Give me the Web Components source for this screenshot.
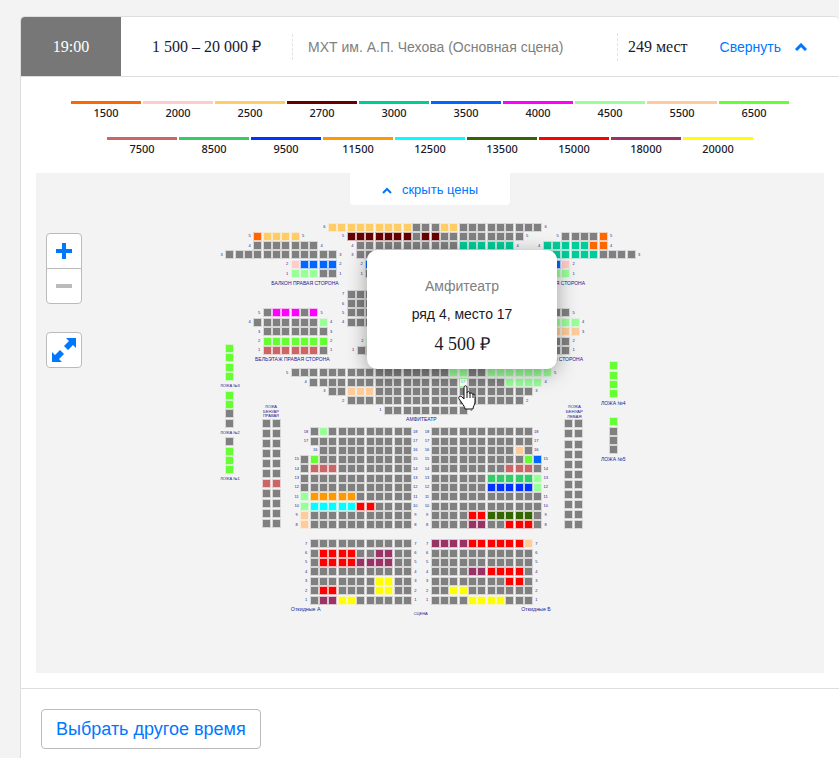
<!DOCTYPE html>
<html lang="ru">
<head>
<meta charset="utf-8">
<meta name="viewport" content="width=device-width, initial-scale=1">
<title>МХТ им. А.П. Чехова</title>
<style>
    body {
        margin: 0;
        min-height: 100vh;
        display: flex;
        flex-direction: column;
        background: #f3f3f3;
        color: #1a1a2b;
        font-family: "Liberation Sans", Arial, sans-serif;
        overflow-x: hidden;
    }
</style>
</head>
<body>
    <session-card>
        <session-header slot="header">
            <span slot="time">19:00</span>
            <span slot="price">1 500 – 20 000 ₽</span>
            <span slot="venue">МХТ им. А.П. Чехова (Основная сцена)</span>
            <span slot="seats">249 мест</span>
        </session-header>
        <price-legend></price-legend>
        <hall-map>
            <seat-tooltip slot="tooltip">
                <span slot="sector">Амфитеатр</span>
                <span slot="place">ряд 4, место 17</span>
                <span slot="price">4 500 ₽</span>
            </seat-tooltip>
        </hall-map>
        <span slot="action">Выбрать другое время</span>
    </session-card>

<script>
const PRICES = [
    ['O', 1500, '#ff6600'],
    ['P', 2000, '#ffcccc'],
    ['Y', 2500, '#ffcc66'],
    ['M', 2700, '#660000'],
    ['T', 3000, '#00cc99'],
    ['B', 3500, '#0066ff'],
    ['F', 4000, '#ff00ff'],
    ['L', 4500, '#99ff99'],
    ['A', 5500, '#ffcc99'],
    ['G', 6500, '#66ff33'],
    ['R', 7500, '#cc6666'],
    ['E', 8500, '#33cc66'],
    ['D', 9500, '#0033ff'],
    ['N', 11500, '#ff9900'],
    ['C', 12500, '#00ffff'],
    ['K', 13500, '#336600'],
    ['X', 15000, '#ff0000'],
    ['V', 18000, '#993366'],
    ['W', 20000, '#ffff00'],
];

const COLORS = { '#': '#808080' };
PRICES.forEach(([key, , color]) => { COLORS[key] = color; });

// row number, x of the first seat, y, seats ('#' is a sold one, '@' the chosen one)
const ROWS = [
    // балкон, правая сторона
    [5, 773, 709, 'OYYYY'],
    [4, 773, 737, '#######'],
    [3, 689, 764, '############'],
    [2, 885, 793, 'PBBBB'],
    [1, 885, 821, 'LLL##'],
    // балкон
    [6, 997, 681, 'YYYYYYYYY###YY#########'],
    [5, 1053, 709, 'MMMMMMM#MM#########'],
    [4, 1081, 737, '###########TTTTTT'],
    [3, 1081, 764, '#################'],
    [2, 1109, 793, 'BBBBBBBBBBBBBBB'],
    [1, 1109, 821, '###############'],
    // балкон, левая сторона
    [5, 1697, 709, '####O'],
    [4, 1641, 737, 'TTTTTOO'],
    [3, 1585, 764, 'TTTTTTTT####'],
    [2, 1585, 793, 'BBBBP'],
    [1, 1585, 821, '##LLL'],
    // бельэтаж, правая сторона
    [5, 801, 938, '#FFF#F'],
    [4, 773, 967, '#######L'],
    [3, 801, 995, '#######'],
    [2, 801, 1023, 'GGGGGGG'],
    [1, 801, 1051, 'RRRRRR#'],
    // бельэтаж
    [7, 1053, 882, '###################'],
    [6, 1053, 911, '###################'],
    [5, 1053, 938, '###################'],
    [4, 1053, 966, '###################'],
    [2, 1111, 1023, 'LLLLLLLLLLLLLLL'],
    [1, 1083, 1051, '#################'],
    // бельэтаж, левая сторона
    [5, 1641, 938, '###'],
    [4, 1641, 967, 'LLLL'],
    [3, 1641, 995, 'AAAA'],
    [2, 1641, 1023, '###'],
    [1, 1641, 1051, '###'],
    // амфитеатр
    [5, 885, 1118, '#################LL##LLLLLLL'],
    [4, 941, 1146, '################@####LLLL'],
    [3, 997, 1174, '##AAA#################'],
    [2, 1053, 1202, '###################'],
    [1, 1165, 1230, '#########'],
    // партер, слева от прохода
    [18, 942, 1295, '#L#########'],
    [17, 942, 1323, '###########'],
    [16, 970, 1351, '##########'],
    [15, 914, 1378, '#G##########'],
    [14, 914, 1406, '#RRR########'],
    [13, 914, 1435, '############'],
    [12, 914, 1462, '############'],
    [11, 914, 1490, 'LNNNNN######'],
    [10, 914, 1518, 'LCCCCCXX####'],
    [9, 914, 1546, 'A###########'],
    [8, 914, 1574, 'A###########'],
    [7, 942, 1631, '###########'],
    [6, 942, 1660, '#XXXX##VV##'],
    [5, 942, 1687, '#XXXXVVVV##'],
    [4, 942, 1715, '###########'],
    [3, 942, 1744, '#######WW##'],
    [2, 942, 1772, '#XX####WW##'],
    [1, 942, 1800, '#VVWW######'],
    // партер, справа от прохода
    [18, 1305, 1295, '###########'],
    [17, 1305, 1323, '###########'],
    [16, 1305, 1351, '#########A#'],
    [15, 1305, 1378, '##########GB'],
    [14, 1305, 1406, '########RRR#'],
    [13, 1305, 1435, '######EEEEEL'],
    [12, 1305, 1462, '######DDDDDL'],
    [11, 1305, 1490, '############'],
    [10, 1305, 1518, '############'],
    [9, 1305, 1546, '####XXKKKKK#'],
    [8, 1305, 1574, '####VV##XXX#'],
    [7, 1305, 1631, 'VVVVXXXXXXA'],
    [6, 1305, 1660, '###########'],
    [5, 1305, 1687, '###########'],
    [4, 1305, 1715, '####VVXXXX#'],
    [3, 1305, 1744, '########XX#'],
    [2, 1305, 1772, '##WW#######'],
    [1, 1305, 1800, '####WWWW###'],
];

// x, y of the first seat, y of the last one, seats from top to bottom
const BOXES = [
    [689, 1045, 1129, 'GGGG'],
    [689, 1185, 1269, 'GG##'],
    [689, 1325, 1409, '#GGG'],
    [799, 1269, 1571, '######R####'],
    [829, 1269, 1571, '######R####'],
    [1705, 1271, 1574, '###########'],
    [1735, 1271, 1574, '###########'],
    [1840, 1097, 1181, 'GGGG'],
    [1840, 1265, 1349, 'G###'],
];

// text, x of the centre, y, size
const LABELS = [
    ['БАЛКОН ПРАВАЯ СТОРОНА', 915, 850, 15],
    ['БАЛКОН ЛЕВАЯ СТОРОНА', 1659, 850, 15],
    ['БЕЛЬЭТАЖ ПРАВАЯ СТОРОНА', 877, 1078, 15],
    ['БЕЛЬЭТАЖ ЛЕВАЯ СТОРОНА', 1642, 1078, 15],
    ['АМФИТЕАТР', 1264, 1258, 15],
    ['ЛОЖА №3', 690, 1157, 12],
    ['ЛОЖА №2', 690, 1298, 12],
    ['ЛОЖА №1', 690, 1436, 12],
    ['ЛОЖА', 813, 1220, 12],
    ['БЕНУАР', 813, 1234, 12],
    ['ПРАВАЯ', 813, 1247, 12],
    ['ЛОЖА', 1723, 1220, 13],
    ['БЕНУАР', 1723, 1234, 13],
    ['ЛЕВАЯ', 1723, 1248, 13],
    ['ЛОЖА №4', 1840, 1210, 15],
    ['ЛОЖА №5', 1840, 1378, 15],
    ['Откидные А', 917, 1827, 16],
    ['Откидные Б', 1608, 1827, 16],
    ['СЦЕНА', 1262, 1840, 12],
];

const SEAT_STEP = 28;

function drawSeat(x, y, key) {
    if (key === '@') {
        return `<rect x="${x - 13}" y="${y - 13}" width="27" height="27" fill="#99ff99"/>
            <rect x="${x - 10}" y="${y - 10}" width="21" height="21" fill="#fff"/>
            <text x="${x}" y="${y + 4}" class="chosen">17</text>`;
    }
    const color = COLORS[key];
    return `<rect x="${x - 13}" y="${y - 13}" width="27" height="27" fill="${color}" fill-opacity="0.25"/>
        <rect x="${x - 10}" y="${y - 10}" width="21" height="21" fill="${color}"/>`;
}

function drawRow([number, x, y, seats]) {
    const last = x + (seats.length - 1) * SEAT_STEP;
    return [...seats].map((key, i) => drawSeat(x + i * SEAT_STEP, y, key)).join('') +
        `<text x="${x - 24}" y="${y + 3}">${number}</text>
        <text x="${last + 24}" y="${y + 3}">${number}</text>`;
}

function drawBox([x, top, bottom, seats]) {
    const step = (bottom - top) / (seats.length - 1);
    return [...seats].map((key, i) => drawSeat(x, Math.round(top + i * step), key)).join('');
}

function drawLabel([text, x, y, size]) {
    return `<text x="${x}" y="${y + 5}" style="font-size: ${size}px">${text}</text>`;
}

class SessionCard extends HTMLElement {
    constructor() {
        super();
        const shadow = this.attachShadow({ mode: 'open' });
        const template = document.createElement('template');
        template.innerHTML = `
            <style>
                :host {
                    display: flex;
                    flex-direction: column;
                    flex: 1 0 auto;
                    margin: 16px 0 0 20px;
                    background: #fff;
                    border: solid #dedede;
                    border-width: 1px 0 0 1px;
                    border-radius: 5px 5px 0 0;
                }
                main {
                    padding: 24px 15px 15px;
                }
                footer {
                    padding: 20px;
                    border-top: 1px solid #dedede;
                }
                button {
                    height: 40px;
                    padding: 0 14px;
                    font: 18px/20px "Liberation Sans", Arial, sans-serif;
                    color: #0077ff;
                    background: #fff;
                    border: 1px solid #bbb;
                    border-radius: 4px;
                    cursor: pointer;
                }
            </style>
            <slot name="header"></slot>
            <main><slot></slot></main>
            <footer>
                <button type="button"><slot name="action"></slot></button>
            </footer>
        `;
        shadow.appendChild(template.content.cloneNode(true));
    }
}

class SessionHeader extends HTMLElement {
    constructor() {
        super();
        const shadow = this.attachShadow({ mode: 'open' });
        const template = document.createElement('template');
        template.innerHTML = `
            <style>
                :host {
                    display: block;
                    border-bottom: 1px solid #dedede;
                }
                header {
                    display: flex;
                    align-items: center;
                    height: 59px;
                    font-size: 14px;
                    line-height: 20px;
                    white-space: nowrap;
                }
                .time, .price, .seats {
                    font-family: "Liberation Serif", "Times New Roman", serif;
                    font-size: 16px;
                }
                .time {
                    flex: 0 0 100px;
                    line-height: 59px;
                    text-align: center;
                    color: #fff;
                    background: #777;
                    border-top-left-radius: 4px;
                }
                .price {
                    flex: 0 0 171px;
                    text-align: center;
                }
                .venue {
                    flex: 1 1 auto;
                    padding: 3px 15px;
                    color: #808080;
                    border-left: 1px dashed #e2e2e2;
                }
                .seats {
                    padding: 4px 32px 4px 10px;
                    border-left: 1px dashed #e2e2e2;
                }
                button {
                    display: flex;
                    align-items: center;
                    gap: 14px;
                    margin-right: 32px;
                    padding: 0;
                    font: inherit;
                    color: #0077ff;
                    background: none;
                    border: 0;
                    cursor: pointer;
                }
            </style>
            <header>
                <div class="time"><slot name="time"></slot></div>
                <div class="price"><slot name="price"></slot></div>
                <div class="venue"><slot name="venue"></slot></div>
                <div class="seats"><slot name="seats"></slot></div>
                <button type="button">Свернуть
                    <svg width="12" height="8" viewBox="0 0 12 8"><path d="M1 7l5-5 5 5" fill="none" stroke="#0077ff" stroke-width="3"/></svg>
                </button>
            </header>
        `;
        shadow.appendChild(template.content.cloneNode(true));
    }
}

class PriceLegend extends HTMLElement {
    constructor() {
        super();
        const shadow = this.attachShadow({ mode: 'open' });
        const items = PRICES.map(([, price, color]) => `<li style="border-color: ${color}">${price}</li>`).join('');
        const template = document.createElement('template');
        template.innerHTML = `
            <style>
                :host {
                    display: block;
                }
                ul {
                    display: flex;
                    flex-wrap: wrap;
                    justify-content: center;
                    gap: 15px 2px;
                    margin: 0;
                    padding: 0 0 15px;
                    list-style: none;
                }
                li {
                    width: 70px;
                    border-top: 3px solid;
                    font: 500 11px/18px "Noto Sans", sans-serif;
                    text-align: center;
                }
            </style>
            <ul>${items}</ul>
        `;
        shadow.appendChild(template.content.cloneNode(true));
    }
}

class HallMap extends HTMLElement {
    constructor() {
        super();
        const shadow = this.attachShadow({ mode: 'open' });
        const template = document.createElement('template');
        template.innerHTML = `
            <style>
                :host {
                    display: block;
                    position: relative;
                    background: #f3f3f3;
                }
                .hall {
                    display: block;
                    width: 100%;
                }
                .hall rect {
                    shape-rendering: crispEdges;
                }
                .hall text {
                    font-family: "Liberation Sans", Arial, sans-serif;
                    font-size: 12px;
                    text-anchor: middle;
                    fill: #1a1a90;
                }
                .hall .chosen {
                    font-size: 12px;
                    fill: #66cc66;
                }
                .toggle {
                    position: absolute;
                    top: 0;
                    left: 50%;
                    transform: translateX(-50%);
                    display: flex;
                    align-items: center;
                    justify-content: center;
                    gap: 10px;
                    width: 160px;
                    height: 32px;
                    padding: 2px 0 0;
                    font: 13px/16px "Liberation Sans", Arial, sans-serif;
                    color: #0077ff;
                    background: #fff;
                    border: 0;
                    border-radius: 0 0 4px 4px;
                    cursor: pointer;
                }
                zoom-controls {
                    position: absolute;
                    top: 60px;
                    left: 10px;
                }
                ::slotted(seat-tooltip) {
                    position: absolute;
                    top: 77px;
                    left: 331px;
                }
                .cursor {
                    position: absolute;
                    top: 212px;
                    left: 422px;
                }
            </style>
            <svg class="hall" viewBox="108 519 2364 1500">
                ${ROWS.map(drawRow).join('')}
                ${BOXES.map(drawBox).join('')}
                ${LABELS.map(drawLabel).join('')}
            </svg>
            <button class="toggle" type="button">
                <svg width="10" height="7" viewBox="0 0 10 7"><path d="M1 6l4-4 4 4" fill="none" stroke="#0077ff" stroke-width="2"/></svg>
                скрыть цены
            </button>
            <zoom-controls></zoom-controls>
            <slot name="tooltip"></slot>
            <svg class="cursor" width="18" height="25" viewBox="0 0 18 25">
                <path d="M6 14V3c0-3 3-3 3 0v5c0-2 3-2 3 1 0-2 3-1 3 1 0-2 2-1 2 1v6c0 3-2 4-2 7H7c0-2-2-4-3-6l-3-4c-1-2 1-4 3-2z" fill="#fff" stroke="#111" stroke-linejoin="round"/>
                <path d="M9 8v5M12 9v4M15 10v3" stroke="#111"/>
            </svg>
        `;
        shadow.appendChild(template.content.cloneNode(true));
    }
}

class ZoomControls extends HTMLElement {
    constructor() {
        super();
        const shadow = this.attachShadow({ mode: 'open' });
        const template = document.createElement('template');
        template.innerHTML = `
            <style>
                :host {
                    display: flex;
                    flex-direction: column;
                    gap: 28px;
                }
                .group {
                    display: flex;
                    flex-direction: column;
                }
                button {
                    display: flex;
                    align-items: center;
                    justify-content: center;
                    width: 36px;
                    height: 36px;
                    padding: 0;
                    color: #0077ff;
                    background: #fff;
                    border: 1px solid #bbb;
                    border-radius: 4px;
                    cursor: pointer;
                }
                .plus {
                    border-radius: 4px 4px 0 0;
                }
                .minus {
                    margin-top: -1px;
                    color: #bbb;
                    border-radius: 0 0 4px 4px;
                }
            </style>
            <div class="group">
                <button class="plus" type="button" aria-label="Увеличить">
                    <svg width="16" height="16" viewBox="0 0 16 16"><path d="M0 8h16M8 0v16" stroke="currentColor" stroke-width="4"/></svg>
                </button>
                <button class="minus" type="button" aria-label="Уменьшить">
                    <svg width="16" height="16" viewBox="0 0 16 16"><path d="M0 8h16" stroke="currentColor" stroke-width="4"/></svg>
                </button>
            </div>
            <button type="button" aria-label="Во весь экран">
                <svg width="24" height="24" viewBox="0 0 24 24" fill="currentColor">
                    <path d="M14 0h10v10l-3-3-5 5-4-4 5-5z"/>
                    <path d="M10 24H0V14l3 3 5-5 4 4-5 5z"/>
                </svg>
            </button>
        `;
        shadow.appendChild(template.content.cloneNode(true));
    }
}

class SeatTooltip extends HTMLElement {
    constructor() {
        super();
        const shadow = this.attachShadow({ mode: 'open' });
        const template = document.createElement('template');
        template.innerHTML = `
            <style>
                :host {
                    display: flex;
                    flex-direction: column;
                    align-items: center;
                    gap: 8px;
                    box-sizing: border-box;
                    width: 190px;
                    padding: 26px 10px 13px;
                    font-size: 14px;
                    line-height: 20px;
                    background: #fff;
                    border-radius: 10px;
                    box-shadow: 0 4px 20px rgba(0, 0, 0, 0.35);
                }
                .sector {
                    color: #808080;
                }
                .price {
                    font: 18px/24px "Liberation Serif", "Times New Roman", serif;
                }
            </style>
            <div class="sector"><slot name="sector"></slot></div>
            <div><slot name="place"></slot></div>
            <div class="price"><slot name="price"></slot></div>
        `;
        shadow.appendChild(template.content.cloneNode(true));
    }
}

customElements.define('zoom-controls', ZoomControls);
customElements.define('seat-tooltip', SeatTooltip);
customElements.define('hall-map', HallMap);
customElements.define('price-legend', PriceLegend);
customElements.define('session-header', SessionHeader);
customElements.define('session-card', SessionCard);
</script>
</body>
</html>
